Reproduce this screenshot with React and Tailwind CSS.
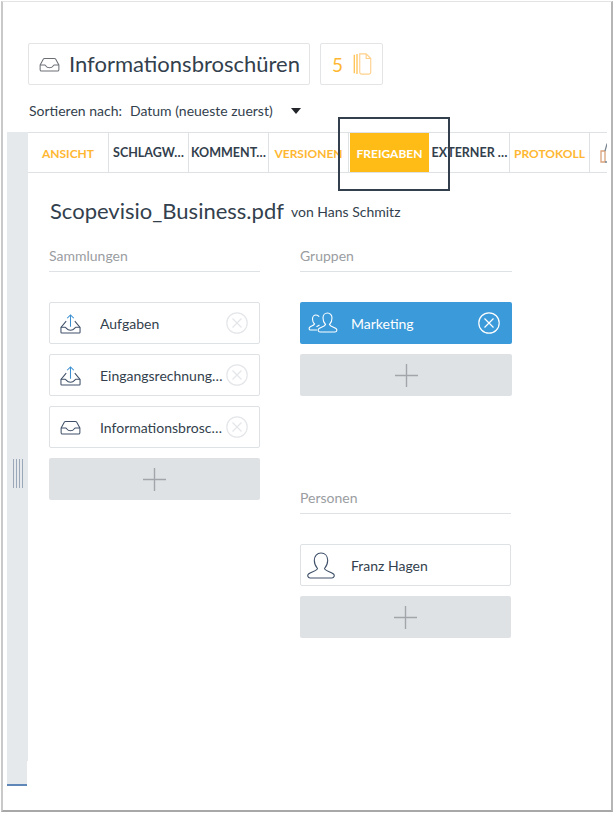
const font = { fontFamily: 'Lato, "Noto Sans", sans-serif' };

function Tray({ className = "" }) {
  return (
    <svg viewBox="0 0 22 16" className={className} fill="none" stroke="currentColor" strokeWidth="1.1">
      <path d="M1 8.500 4.500 2.200a1.500 1.500 0 0 1 1.300-.7h10.400a1.500 1.500 0 0 1 1.300.7L21 8.500v5a1.500 1.500 0 0 1-1.500 1.500h-17A1.500 1.500 0 0 1 1 13.500z" />
      <path d="M1 8.500h5c1 0 1.200 3 5 3s4-3 5-3h5" />
    </svg>
  );
}

function Outbox({ className = "" }) {
  return (
    <svg viewBox="0 0 22 22" className={className} fill="none" stroke="#3f5068" strokeWidth="1.1">
      <path d="M6.500 8.500 1 15v5.200c0 .5.3.8.8.8h18.400c.5 0 .8-.3.8-.8V15l-5.500-6.500" />
      <path d="M1 15h4.500c1 0 1.500 3 5.500 3s4.500-3 5.500-3H21" />
      <path d="M11 14.500V2M7.500 5.500 11 2l3.500 3.500" stroke="#3b8fd0" />
    </svg>
  );
}

function Close({ light }) {
  const c = light ? "#ffffff" : "#e4e6e9";
  return (
    <svg viewBox="0 0 22 22" className="w-[22px] h-[22px] shrink-0" fill="none" stroke={c} strokeWidth="1.2">
      <circle cx="11" cy="11" r="10.200" />
      <path d="M6.500 6.500l9 9M15.500 6.500l-9 9" />
    </svg>
  );
}

function AddButton() {
  return (
    <div className="h-[42px] bg-[#dfe2e5] rounded-[2px] flex items-center justify-center">
      <svg viewBox="0 0 23 23" className="w-[23px] h-[23px]" stroke="#a2a6ab" strokeWidth="1.4">
        <path d="M0 11.500h23M11.500 0v23" />
      </svg>
    </div>
  );
}

function Item({ icon, label, close }) {
  return (
    <div className="h-[42px] border border-[#dfe2e5] rounded-[2px] bg-white flex items-center pl-[10px] pr-[11px]">
      <div className="w-[40px] shrink-0">{icon}</div>
      <span className="flex-1 min-w-0 truncate text-[14px] text-[#333f4d]">{label}</span>
      {close && <Close />}
    </div>
  );
}

function Heading({ children }) {
  return (
    <div className="h-[26px] border-b border-[#dfe2e5] text-[14px] text-[#9a9da1] leading-[17px] pt-[1px]">
      {children}
    </div>
  );
}

function Tab({ label, tone, active, first }) {
  if (active) {
    return (
      <div className="relative w-[79px] shrink-0 ml-px mr-px h-[40px] -my-px bg-[#ffbc17] text-white flex items-center justify-center text-[12px] font-bold pt-[2px]">
        FREIGABEN
        <div className="absolute left-[33px] top-[40px] w-0 h-0 border-x-[7px] border-x-transparent border-t-[7px] border-t-[#ffbc17]" />
      </div>
    );
  }
  const cls = tone === "dark" ? "text-[#333f4d] font-bold text-[12.5px]" : "text-[#ffb732] font-bold text-[12px]";
  const w = first ? "w-[81px]" : "w-[80px]";
  return (
    <div className={`${w} shrink-0 h-full border-r border-[#dfe2e5] flex items-center justify-center pt-[2px] whitespace-nowrap overflow-hidden ${cls}`}>
      {label}
    </div>
  );
}

export default function App() {
  return (
    <div style={font} className="w-[614px] h-[814px] bg-white overflow-hidden relative">
      <div className="ml-px mt-px w-[612px] h-[811px] border-l-2 border-r-2 border-t border-b-2 border-l-[#c9c9c9] border-r-[#b5b5b5] border-t-[#e4e4e4] border-b-[#a8a8a8] flex flex-col">
        <div className="pl-[25px] pt-[41px] h-[130px] shrink-0">
          <div className="flex gap-[10px]">
            <div className="w-[282px] h-[42px] border border-[#e2e4e6] rounded-[2px] flex items-center pl-[10px] text-[#333f4d]">
              <Tray className="w-[21px] h-[15px] text-[#6b6f74]" />
              <span className="ml-[9px] text-[22px] leading-none">Informationsbroschüren</span>
            </div>
            <div className="w-[63px] h-[42px] border border-[#e2e4e6] rounded-[2px] flex items-center pl-[11px] text-[#ffb732]">
              <span className="text-[19px] leading-none">5</span>
              <svg viewBox="0 0 20 24" className="ml-[10px] w-[19px] h-[22px]" fill="none" stroke="#ffcf8a" strokeWidth="1.2">
                <path d="M1 2v20M4 1v22" stroke="#ffb732" />
                <path d="M7 1h7l5 5v15a2 2 0 0 1-2 2H9a2 2 0 0 1-2-2z" />
                <path d="M14 1v5h5" />
              </svg>
            </div>
          </div>
          <div className="flex items-center mt-[16px] text-[14px] text-[#333f4d] leading-[20px]">
            <span className="ml-px">Sortieren nach:</span>
            <span className="ml-[8px]">Datum (neueste zuerst)</span>
            <span className="ml-[18px] w-0 h-0 border-x-[5px] border-x-transparent border-t-[6px] border-t-[#22262b]" />
          </div>
        </div>
        <div className="flex flex-1 min-h-0">
          <div className="w-[21px] shrink-0 ml-[4px] flex flex-col">
            <div className="h-[629px] bg-[#e6e9ec] flex items-start justify-center pt-[327px]">
              <svg viewBox="0 0 10 29" className="w-[10px] h-[29px]" stroke="#9aa8ba" strokeWidth="1">
                <path d="M.5 0v29M3.500 0v29M6.500 0v29M9.500 0v29" />
              </svg>
            </div>
            <div className="h-[25px] w-[20px] bg-[#e6e9ec] border-b-2 border-b-[#5f88b8]" />
          </div>
          <div className="flex-1 min-w-0">
            <div className="h-[41px] w-[579px] border-y border-[#dfe2e5] flex items-center overflow-hidden">
              <Tab label="ANSICHT" first />
              <Tab label="SCHLAGW…" tone="dark" />
              <Tab label="KOMMENT…" tone="dark" />
              <Tab label="VERSIONEN" />
              <Tab active />
              <Tab label="EXTERNER …" tone="dark" />
              <Tab label="PROTOKOLL" />
              <svg viewBox="0 0 18 22" className="ml-[10px] w-[18px] h-[22px] shrink-0" fill="none" stroke="#7a8693" strokeWidth="1.3">
                <path d="M1 9h4v11H1z" stroke="#d9a27c" />
                <path d="M5 9l2-7c2-1 4 0 4 3v4h6v11H5" />
              </svg>
            </div>
            <div className="pl-[22px] pt-[25px]">
              <div className="flex items-center text-[#333f4d]">
                <span className="text-[22px] leading-[26px]">Scopevisio_Business.pdf</span>
                <span className="ml-[7px] mt-[1px] text-[14px]">von Hans Schmitz</span>
              </div>
              <div className="flex mt-[22px]">
                <div className="w-[211px] ml-[-1px]">
                  <Heading>Sammlungen</Heading>
                  <div className="mt-[30px] flex flex-col gap-[10px]">
                    <Item icon={<Outbox className="w-[21px] h-[21px]" />} label="Aufgaben" close />
                    <Item icon={<Outbox className="w-[21px] h-[21px]" />} label="Eingangsrechnungen" close />
                    <Item icon={<Tray className="w-[21px] h-[15px] text-[#3f5068]" />} label="Informationsbroschüren" close />
                    <AddButton />
                  </div>
                </div>
                <div className="w-[212px] ml-[40px]">
                  <Heading>Gruppen</Heading>
                  <div className="mt-[30px] flex flex-col gap-[10px]">
                    <div className="h-[42px] bg-[#3b9ad9] rounded-[2px] flex items-center pl-[8px] pr-[12px] text-white">
                      <svg viewBox="0 0 30 22" className="w-[30px] h-[22px] shrink-0" fill="none" stroke="#fff" strokeWidth="1.1">
                        <path d="M12 20h15c2 0 2.500-2.500 1-3.500-2-1.300-6-2-6.500-4 2-2 2.500-4 2.500-6.500C24 3 22 1 19.500 1S15 3 15 6c0 2.500 .5 4.500 2.500 6.500-.5 2-4.500 2.700-6.500 4-1.500 1-1 3.500 1 3.500z" />
                        <path d="M9 18H2.500C1 18 .5 16 2 15c1.500-1 4-1.500 4.500-3C5 10.500 4.500 9 4.500 7 4.500 4.500 6 3 8 3c1.500 0 2.500 .7 3.200 1.800M11.500 13c-1 .7-2 1.200-3 1.800" />
                      </svg>
                      <span className="ml-[13px] flex-1 text-[14px]">Marketing</span>
                      <Close light />
                    </div>
                    <AddButton />
                  </div>
                  <div className="w-[211px] mt-[92px]">
                    <Heading>Personen</Heading>
                    <div className="mt-[30px] flex flex-col gap-[10px]">
                      <Item
                        icon={
                          <svg viewBox="0 0 28 27" className="w-[28px] h-[27px] mt-px -ml-[4px]" fill="none" stroke="#3f5068" strokeWidth="1.1">
                            <path d="M3 26h22c2 0 3-2.500 1.500-4-2.500-2.200-8.500-3-9-5.500 2-2.200 3.200-5 3.200-8.200C20.700 4 18 1 14 1S7.300 4 7.300 8.300c0 3.200 1.200 6 3.200 8.200-.5 2.500-6.500 3.300-9 5.500C0 23.500 1 26 3 26z" />
                          </svg>
                        }
                        label="Franz Hagen"
                      />
                      <AddButton />
                    </div>
                  </div>
                </div>
              </div>
            </div>
          </div>
        </div>
      </div>
      <div className="absolute left-[338px] top-[117px] w-[112px] h-[74px] border-2 border-[#333f4d]" />
    </div>
  );
}
